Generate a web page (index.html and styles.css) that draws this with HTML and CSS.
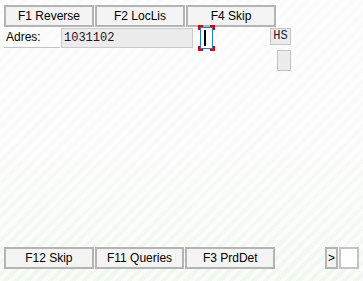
FILE: index.html
```html
<!DOCTYPE html>
<html lang="en">
<head>
  <meta charset="UTF-8" />
  <title>Adres</title>
  <link rel="stylesheet" href="styles.css">
</head>
<body>

  <div class="keys">
    <div class="key">F1 Reverse</div>
    <div class="key">F2 LocLis</div>
    <div class="key">F4 Skip</div>
  </div>

  <div class="fields">
    <div class="label">Adres:</div>
    <div class="input">1031102</div>
    <div class="focus">
      <div class="entry"><span class="caret"></span></div>
    </div>
    <div class="side">
      <div class="hs">HS</div>
      <div class="scroll"></div>
    </div>
  </div>

  <div class="keys bottom">
    <div class="key">F12 Skip</div>
    <div class="key">F11 Queries</div>
    <div class="key">F3 PrdDet</div>
    <div class="arrow">&gt;</div>
    <div class="blank"></div>
  </div>

</body>
</html>
```

FILE: styles.css
```css
html, body { height: 100%; }
body {
  margin: 0;
  padding: 5px 4px 12px 4px;
  box-sizing: border-box;
  display: flex;
  flex-direction: column;
  font-family: "Liberation Sans", Arial, sans-serif;
  font-size: 12px;
  color: #000;
  background:
    repeating-linear-gradient(135deg, rgba(255,255,255,0) 0 4px, rgba(255,255,255,0.6) 4px 8px),
    linear-gradient(#fbfbfb 0%, #f9faf9 55%, #f0f8ee 100%);
}
.keys { display: flex; gap: 1px; }
.key {
  width: 90px;
  height: 22px;
  box-sizing: border-box;
  border: 2px solid #b4b4b4;
  background: #f4f4f4;
  text-align: center;
  line-height: 18px;
}
.bottom { margin-top: auto; }

.fields { display: flex; align-items: flex-start; }
.label {
  width: 56px;
  height: 21px;
  box-sizing: border-box;
  border-bottom: 1px solid #c4c4c4;
  padding-left: 2px;
  line-height: 20px;
}
.input {
  margin: 1px 0 0 1px;
  width: 132px;
  height: 20px;
  box-sizing: border-box;
  border: 1px solid #cacaca;
  background: #ebebeb;
  padding-left: 2px;
  font-family: "Liberation Mono", "Courier New", monospace;
  font-size: 12px;
  line-height: 18px;
  color: #2a102a;
}
.focus {
  margin: -2px 0 0 5px;
  width: 17px;
  height: 26px;
  box-sizing: border-box;
  padding: 2px;
  background:
    linear-gradient(#e00000, #e00000) left top / 5px 2px no-repeat,
    linear-gradient(#e00000, #e00000) left top / 2px 5px no-repeat,
    linear-gradient(#e00000, #e00000) right top / 5px 2px no-repeat,
    linear-gradient(#e00000, #e00000) right top / 2px 5px no-repeat,
    linear-gradient(#e00000, #e00000) left bottom / 5px 2px no-repeat,
    linear-gradient(#e00000, #e00000) left bottom / 2px 5px no-repeat,
    linear-gradient(#e00000, #e00000) right bottom / 5px 2px no-repeat,
    linear-gradient(#e00000, #e00000) right bottom / 2px 5px no-repeat;
}
.entry {
  width: 13px;
  height: 22px;
  box-sizing: border-box;
  border: 1px solid #1f7ed0;
  background: #fff;
  padding: 2px 0 0 3px;
}
.caret {
  display: block;
  width: 2px;
  height: 16px;
  background: #000;
}
.side {
  margin-left: 55px;
  display: flex;
  flex-direction: column;
  align-items: flex-end;
}
.hs {
  margin-top: 1px;
  width: 21px;
  height: 17px;
  box-sizing: border-box;
  border: 1px solid #c4c4c4;
  background: #ececec;
  text-align: center;
  font-family: "Liberation Mono", "Courier New", monospace;
  font-size: 12px;
  line-height: 15px;
  color: #1a1a3a;
}
.scroll {
  margin-top: 5px;
  width: 14px;
  height: 21px;
  box-sizing: border-box;
  border: 1px solid #c4c4c4;
  background: #ececec;
}
.arrow {
  margin-left: 49px;
  width: 13px;
  height: 22px;
  box-sizing: border-box;
  border: 2px solid #b4b4b4;
  background: #f4f4f4;
  text-align: center;
  line-height: 18px;
}
.blank {
  width: 20px;
  height: 22px;
  box-sizing: border-box;
  border: 2px solid #c4c4c4;
  background: #fff;
}
```
